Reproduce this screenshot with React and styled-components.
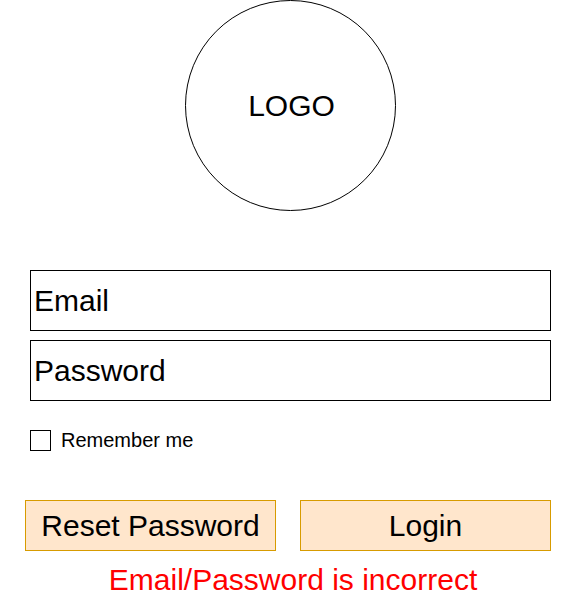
import React from "react";
import styled, { createGlobalStyle } from "styled-components";

const Global = createGlobalStyle`
  html, body { margin: 0; padding: 0; background: #ffffff; }
  body { font-family: "Liberation Sans", Arial, Helvetica, sans-serif; color: #000; }
  * { box-sizing: border-box; }
`;

const Page = styled.div`
  width: 581px;
  height: 611px;
  display: flex;
  flex-direction: column;
  align-items: stretch;
`;

const LogoWrap = styled.div`
  display: flex;
  justify-content: flex-start;
  padding-left: 185px;
`;

const Logo = styled.div`
  width: 211px;
  height: 211px;
  border: 1px solid #000;
  border-radius: 50%;
  display: flex;
  align-items: center;
  justify-content: center;
  font-size: 30px;
  padding-left: 2px;
`;

const Form = styled.form`
  display: flex;
  flex-direction: column;
  margin-top: 59px;
  padding: 0 30px;
  gap: 9px;
`;

const Field = styled.div`
  height: 61px;
  border: 1px solid #000;
  display: flex;
  align-items: center;
  padding-left: 3px;
  font-size: 30px;
`;

const CheckRow = styled.label`
  display: flex;
  align-items: center;
  gap: 10px;
  margin-top: 20px;
  font-size: 20px;
  height: 21px;
`;

const Box = styled.span`
  width: 21px;
  height: 21px;
  border: 1px solid #000;
  background: #fff;
`;

const Buttons = styled.div`
  display: flex;
  gap: 24px;
  margin-top: 40px;
  margin-left: -5px;
`;

const Button = styled.button`
  width: 251px;
  height: 51px;
  background: #ffe6cc;
  border: 1px solid #d79b00;
  font-family: inherit;
  font-size: 30px;
  color: #000;
  padding: 0;
  display: flex;
  align-items: center;
  justify-content: center;
`;

const Error = styled.div`
  color: #ff0000;
  font-size: 30px;
  text-align: center;
  margin-top: 12px;
  padding-left: 5px;
  line-height: 34px;
`;

export default function App() {
  return (
    <>
      <Global />
      <Page>
        <LogoWrap>
          <Logo>LOGO</Logo>
        </LogoWrap>
        <Form onSubmit={(e) => e.preventDefault()}>
          <Field>Email</Field>
          <Field>Password</Field>
          <CheckRow>
            <Box />
            <span>Remember me</span>
          </CheckRow>
          <Buttons>
            <Button type="button">Reset Password</Button>
            <Button type="submit">Login</Button>
          </Buttons>
        </Form>
        <Error>Email/Password is incorrect</Error>
      </Page>
    </>
  );
}
